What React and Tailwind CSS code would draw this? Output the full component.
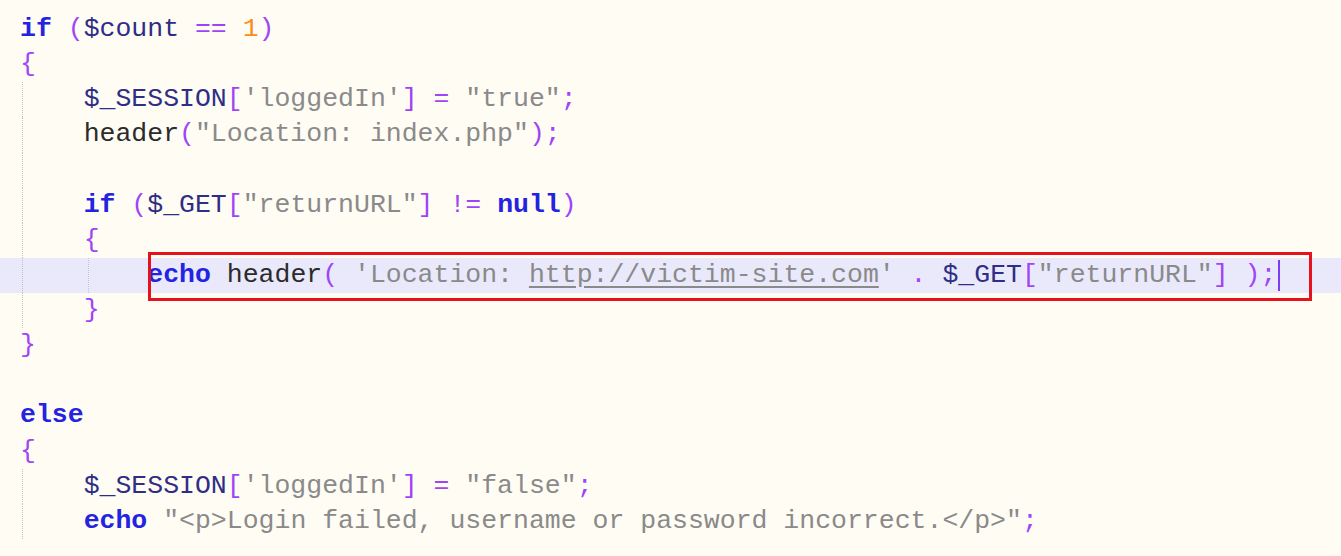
import React from "react";

const C = {
  kw: "text-[#2323e0] font-bold",
  v: "text-[#2e2e86]",
  fn: "text-[#2b2b2b]",
  s: "text-[#8a8a8a]",
  p: "text-[#a044f5]",
  n: "text-[#ff8a1c]",
};

const T = ({ t, children }) => <span className={C[t]}>{children}</span>;

function Line({ children, guides = [], active, overlay }) {
  return (
    <div
      className={`relative h-[35.14px] leading-[35.14px] pl-[20px] whitespace-pre ${
        active ? "bg-[#e9e9fb]" : ""
      }`}
    >
      {guides.map((x) => (
        <span
          key={x}
          className="absolute top-0 h-full border-l border-dotted border-[#c4c4c4]"
          style={{ left: x }}
        />
      ))}
      {children}
      {overlay}
    </div>
  );
}

export default function App() {
  return (
    <div
      className="w-[1341px] h-[556px] overflow-hidden bg-[#fffcf4] pt-[12px] text-[26.5px] text-[#2b2b2b]"
      style={{ fontFamily: '"Liberation Mono", "Courier New", monospace' }}
    >
      <Line>
        <T t="kw">if</T> <T t="p">(</T><T t="v">$count</T> <T t="p">==</T> <T t="n">1</T><T t="p">)</T>
      </Line>
      <Line>
        <T t="p">{"{"}</T>
      </Line>
      <Line guides={[22]}>
        {"    "}<T t="v">$_SESSION</T><T t="p">[</T><T t="s">'loggedIn'</T><T t="p">]</T> <T t="p">=</T> <T t="s">"true"</T><T t="p">;</T>
      </Line>
      <Line guides={[22]}>
        {"    "}<T t="fn">header</T><T t="p">(</T><T t="s">"Location: index.php"</T><T t="p">);</T>
      </Line>
      <Line guides={[22]} />
      <Line guides={[22]}>
        {"    "}<T t="kw">if</T> <T t="p">(</T><T t="v">$_GET</T><T t="p">[</T><T t="s">"returnURL"</T><T t="p">]</T> <T t="p">!=</T> <T t="kw">null</T><T t="p">)</T>
      </Line>
      <Line guides={[22]}>
        {"    "}<T t="p">{"{"}</T>
      </Line>
      <Line
        guides={[22, 88]}
        active
        overlay={
          <>
            <span className="absolute left-[148px] top-[-6px] w-[1164px] h-[49px] border-[3px] border-[#e5121d]" />
            <span className="absolute left-[1278px] top-[2px] w-[2px] h-[31px] bg-[#7a3cf5]" />
          </>
        }
      >
        {"        "}<T t="kw">echo</T> <T t="fn">header</T><T t="p">(</T> <T t="s">'Location: <span className="underline decoration-[#8a8a8a] underline-offset-[4px]">http://victim-site.com</span>'</T> <T t="p">.</T> <T t="v">$_GET</T><T t="p">[</T><T t="s">"returnURL"</T><T t="p">]</T> <T t="p">);</T>
      </Line>
      <Line guides={[22]}>
        {"    "}<T t="p">{"}"}</T>
      </Line>
      <Line>
        <T t="p">{"}"}</T>
      </Line>
      <Line />
      <Line>
        <T t="kw">else</T>
      </Line>
      <Line>
        <T t="p">{"{"}</T>
      </Line>
      <Line guides={[22]}>
        {"    "}<T t="v">$_SESSION</T><T t="p">[</T><T t="s">'loggedIn'</T><T t="p">]</T> <T t="p">=</T> <T t="s">"false"</T><T t="p">;</T>
      </Line>
      <Line guides={[22]}>
        {"    "}<T t="kw">echo</T> <T t="s">"&lt;p&gt;Login failed, username or password incorrect.&lt;/p&gt;"</T><T t="p">;</T>
      </Line>
    </div>
  );
}
